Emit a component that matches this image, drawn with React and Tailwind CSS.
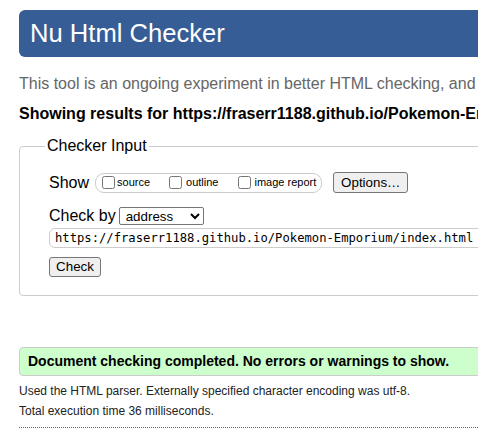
import React from 'react';

const App = () => {
    const url = "https://fraserr1188.github.io/Pokemon-Emporium/index.html";

    return (
        <div className="w-[478px] h-[442px] overflow-hidden bg-white font-['Liberation_Sans',Arial,sans-serif] text-black">
            <div className="w-[760px] pl-[19px]">
                <h1 className="mt-[10px] h-[47px] flex items-center pl-[11px] rounded-l-[6px] bg-[#365d95] text-white text-[25.6px] font-normal leading-none">
                    Nu Html Checker
                </h1>

                <p className="mt-[17px] text-[16px] leading-[20px] text-[#666]">
                    This tool is an ongoing experiment in better HTML checking, and its behavior remains subject to change
                </p>

                <p className="mt-[10px] text-[16px] leading-[20px] font-bold">
                    Showing results for {url}
                </p>

                <fieldset className="mt-[13px] border border-[#ccc] rounded-[4px] px-[29px] pb-[17px]">
                    <legend className="ml-[-4px] px-[2px] text-[16px] leading-[18px]">Checker Input</legend>

                    <div className="mt-[17px] flex items-center h-[21px]">
                        <span className="text-[16px]">Show</span>
                        <div className="ml-[6px] flex items-center h-[20px] pl-[6px] pr-[5px] border border-[#ccc] rounded-[9px] text-[11px]">
                            <label className="flex items-center">
                                <input type="checkbox" className="m-0 w-[13px] h-[13px]" />
                                <span className="ml-[2px]">source</span>
                            </label>
                            <label className="flex items-center ml-[19px]">
                                <input type="checkbox" className="m-0 w-[13px] h-[13px]" />
                                <span className="ml-[4px]">outline</span>
                            </label>
                            <label className="flex items-center ml-[20px]">
                                <input type="checkbox" className="m-0 w-[13px] h-[13px]" />
                                <span className="ml-[3px]">image report</span>
                            </label>
                        </div>
                        <button className="ml-[11px] w-[75px] h-[21px] bg-[#efefef] border border-[#767676] rounded-[3px] text-[13.33px] leading-none">
                            Options…
                        </button>
                    </div>

                    <div className="mt-[13px] flex items-center h-[20px]">
                        <span className="text-[16px]">Check by</span>
                        <select className="ml-[3px] w-[85px] h-[18px] pl-[2px] border border-[#767676] rounded-[2px] text-[13.33px] leading-none bg-white">
                            <option>address</option>
                        </select>
                    </div>

                    <div className="mt-[2px] h-[20px] w-[700px] flex items-center pl-[5px] border border-[#ccc] rounded-[6px] font-['DejaVu_Sans_Mono',monospace] text-[12.2px]">
                        {url}
                    </div>

                    <button className="mt-[9px] w-[52px] h-[20px] bg-[#efefef] border border-[#767676] rounded-[3px] text-[13.33px] leading-none">
                        Check
                    </button>
                </fieldset>

                <div className="mt-[51px] h-[29px] flex items-center pl-[8px] bg-[#ccffcc] border border-[#ccc] rounded-l-[4px] text-[14px] font-bold">
                    Document checking completed. No errors or warnings to show.
                </div>

                <p className="mt-[7px] text-[12px] leading-[16px] text-[#222]">
                    Used the HTML parser. Externally specified character encoding was utf-8.
                </p>
                <p className="mt-[4px] text-[12px] leading-[16px] text-[#222]">
                    Total execution time 36 milliseconds.
                </p>

                <div className="mt-[8px] border-t border-dotted border-[#666]"></div>
            </div>
        </div>
    );
};

export default App;
